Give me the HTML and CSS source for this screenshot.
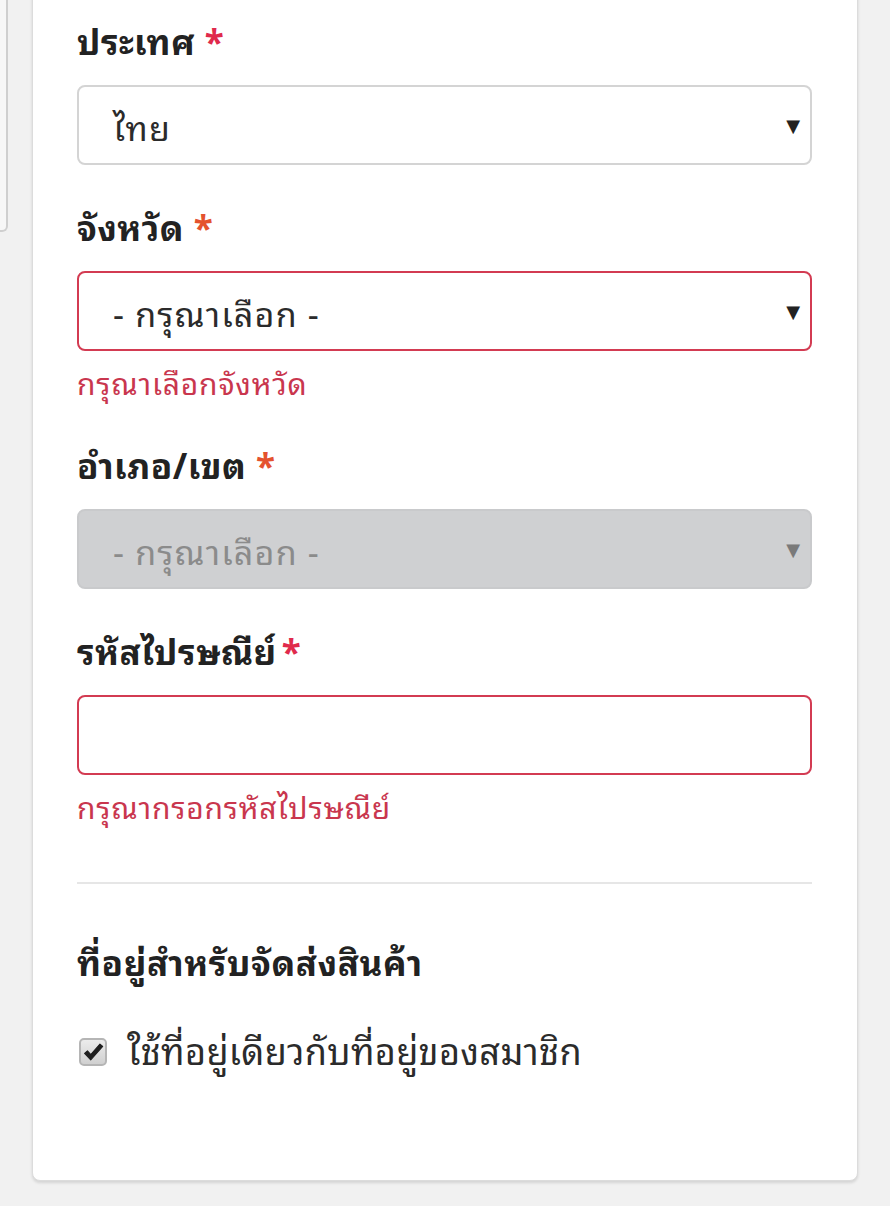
FILE: index.html
```html
<!DOCTYPE html>
<html lang="th">
<head>
<meta charset="utf-8">
<title>ที่อยู่</title>
<link rel="stylesheet" href="styles.css">
</head>
<body>
<div class="side-panel"></div>
<div class="card">
  <div class="group">
    <label class="label">ประเทศ <span class="req req-a">*</span></label>
    <div class="select" role="combobox"><span class="value">ไทย</span><span class="arrow">▼</span></div>
  </div>
  <div class="group">
    <label class="label">จังหวัด <span class="req req-b">*</span></label>
    <div class="select is-error" role="combobox"><span class="value">- กรุณาเลือก -</span><span class="arrow">▼</span></div>
    <div class="error-text">กรุณาเลือกจังหวัด</div>
  </div>
  <div class="group">
    <label class="label">อำเภอ/เขต <span class="req req-b">*</span></label>
    <div class="select is-disabled" role="combobox" aria-disabled="true"><span class="value">- กรุณาเลือก -</span><span class="arrow">▼</span></div>
  </div>
  <div class="group">
    <label class="label">รหัสไปรษณีย์<span class="req req-a req-tight">*</span></label>
    <input class="input is-error" type="text">
    <div class="error-text">กรุณากรอกรหัสไปรษณีย์</div>
  </div>
  <hr class="divider">
  <h3 class="section-title">ที่อยู่สำหรับจัดส่งสินค้า</h3>
  <label class="check-row">
    <span class="checkbox">
      <svg class="tick" viewBox="0 0 16 16"><path d="M1.2 8.6 L5.9 13.6 L15 3.4 L12.9 1.6 L5.9 9.6 L3.4 6.7 Z" fill="#1f1f1f" stroke="#1f1f1f" stroke-width="0.8" stroke-linejoin="round"/></svg>
    </span>
    <span class="check-text">ใช้ที่อยู่เดียวกับที่อยู่ของสมาชิก</span>
  </label>
</div>
</body>
</html>
```

FILE: styles.css
```css
html, body {
  margin: 0;
  padding: 0;
}
body {
  background: #f1f1f1;
  font-family: "Noto Sans", "Noto Sans Thai Looped", "Noto Sans Thai", "DejaVu Sans", sans-serif;
  color: #2b2b2b;
  height: 1206px;
  overflow: hidden;
  position: relative;
}
.side-panel {
  position: absolute;
  left: -10px;
  top: -10px;
  width: 16px;
  height: 240px;
  background: #f7f7f7;
  border-right: 2px solid #cfcfcf;
  border-bottom: 2px solid #cfcfcf;
  border-radius: 0 0 6px 0;
}
.card {
  margin: -12px 0 0 32px;
  width: 826px;
  box-sizing: border-box;
  background: #fff;
  border: 1px solid #dcdcdc;
  border-radius: 8px;
  box-shadow: 0 2px 3px rgba(0,0,0,0.12);
  padding: 32px 45px 106px 44px;
}
.group {
  margin-bottom: 42px;
}
.label {
  display: block;
  font-size: 35px;
  font-weight: 700;
  line-height: 42px;
  letter-spacing: 0.5px;
  color: #222;
  margin-bottom: 22px;
}
.req {
  font-weight: 700;
}
.req-tight {
  margin-left: 5px;
}
.req-a { color: #e02a4c; }
.req-b { color: #e4522e; }
.select, .input {
  box-sizing: border-box;
  width: 100%;
  height: 80px;
  border: 2px solid #d4d4d4;
  border-radius: 8px;
  background: #fff;
  display: flex;
  align-items: center;
  justify-content: space-between;
  padding: 0 10px 0 34px;
  font-size: 34px;
  letter-spacing: 1.2px;
  color: #2b2b2b;
}
.input {
  display: block;
  font-family: inherit;
  outline: none;
}
.arrow {
  font-size: 18px;
  color: #222;
  letter-spacing: 0;
  font-family: "DejaVu Sans", sans-serif;
}
.is-error {
  border-color: #d33b52;
}
.is-disabled {
  background: #cfd0d2;
  border-color: #c9cacc;
  color: #8b8b8b;
}
.is-disabled .arrow {
  color: #7a7a7a;
}
.error-text {
  margin-top: 13px;
  font-size: 30px;
  line-height: 39px;
  letter-spacing: 0.8px;
  color: #c9364e;
}
.group:nth-of-type(4) {
  margin-bottom: 0;
}
.divider {
  border: 0;
  border-top: 2px solid #e6e6e6;
  margin: 55px 0 0;
}
.section-title {
  margin: 58px 0 0;
  font-size: 35px;
  font-weight: 700;
  line-height: 42px;
  letter-spacing: 0.6px;
  color: #222;
}
.check-row {
  display: flex;
  align-items: center;
  gap: 20px;
  margin-top: 46px;
  margin-left: 2px;
}
.checkbox {
  width: 28px;
  height: 28px;
  flex: none;
  box-sizing: border-box;
  border: 2px solid #b5b5b5;
  border-radius: 5px;
  background: linear-gradient(#ececec, #d0d0d0);
  display: flex;
  align-items: center;
  justify-content: center;
}
.tick {
  width: 21px;
  height: 21px;
  display: block;
}
.check-text {
  font-size: 36px;
  line-height: 44px;
  letter-spacing: 0.35px;
  color: #2b2b2b;
}
```
